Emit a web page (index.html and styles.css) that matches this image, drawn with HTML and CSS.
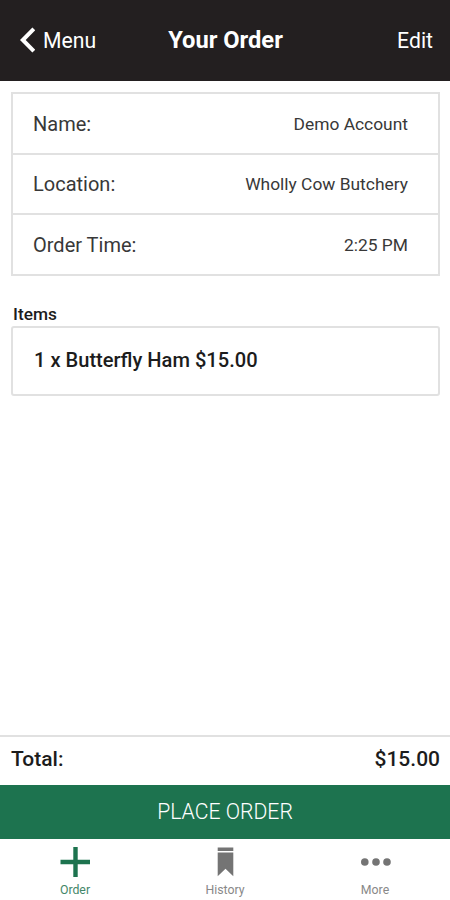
FILE: index.html
```html
<!DOCTYPE html>
<html lang="en">
<head>
<meta charset="utf-8">
<title>Your Order</title>
<link rel="stylesheet" href="styles.css">
</head>
<body>
<div class="app">
  <header class="header">
    <a class="back"><svg class="chevron" width="17" height="26" viewBox="0 0 17 26"><path d="M15.8 1.8 4.8 13l11 11.2" fill="none" stroke="currentColor" stroke-width="4"/></svg><span class="label">Menu</span></a>
    <h1 class="title">Your Order</h1>
    <a class="edit">Edit</a>
  </header>
  <main class="content">
    <dl class="details">
      <div class="row"><dt>Name:</dt><dd class="value">Demo Account</dd></div>
      <div class="row"><dt>Location:</dt><dd class="value">Wholly Cow Butchery</dd></div>
      <div class="row"><dt>Order Time:</dt><dd class="value">2:25 PM</dd></div>
    </dl>
    <h2 class="items-title">Items</h2>
    <div class="item"><span>1 x Butterfly Ham $15.00</span></div>
  </main>
  <div class="total"><span>Total:</span><span>$15.00</span></div>
  <button class="place"><span>PLACE ORDER</span></button>
  <nav class="tabs">
    <a class="tab active"><svg width="30" height="30" viewBox="0 0 30 30"><path d="M15.5 0v30M.5 15h30" stroke="currentColor" stroke-width="4.4"/></svg><span>Order</span></a>
    <a class="tab"><svg width="30" height="30" viewBox="0 0 30 30"><path d="M7.7 .5h15.6v3.6H7.7zM7.7 5.5h15.6v23.8l-7.8-7.6-7.8 7.6z" fill="currentColor"/></svg><span>History</span></a>
    <a class="tab"><svg width="31" height="30" viewBox="0 0 31 30"><g fill="currentColor"><circle cx="4.8" cy="15" r="3.8"/><circle cx="16" cy="15" r="3.8"/><circle cx="27" cy="15" r="3.8"/></g></svg><span>More</span></a>
  </nav>
</div>
</body>
</html>
```
FILE: styles.css
```css
* { box-sizing: border-box; }
body { margin: 0; background: #fff; color: #1c1c1c; font-family: Roboto, sans-serif; }
.app { height: 900px; display: flex; flex-direction: column; }
.header { height: 81px; flex: none; background: #231f20; color: #fff; display: grid; grid-template-columns: 1fr auto 1fr; align-items: center; padding: 0 17px 1px 18px; font-size: 21.2px; }
.back { display: flex; align-items: center; gap: 8px; }
.title { margin: 0; font-size: 23.7px; font-weight: 700; line-height: 28px; }
.edit { text-align: right; }
.content { flex: 1; padding: 11px 10px 0 11px; }
.details { margin: 0; border: 2px solid #e1e1e1; height: 184px; display: grid; grid-template-rows: 59px 60px 61px; }
.row { display: flex; justify-content: space-between; align-items: center; padding: 0 30px 0 20px; font-size: 20px; color: #383838; }
.row + .row { border-top: 2px solid #e1e1e1; }
.value { margin: 0; font-size: 17.4px; }
.items-title { margin: 28px 2px 2px; font-size: 17.3px; line-height: 20px; font-weight: 500; }
.item { height: 70px; border: 2px solid #e1e1e1; border-radius: 3px; padding: 0 21px 2px; display: flex; align-items: center; font-size: 20.1px; font-weight: 500; }
.total { height: 50px; border-top: 2px solid #e1e1e1; display: flex; align-items: center; justify-content: space-between; padding: 0 10px 5px 11px; font-size: 21px; font-weight: 500; }
.place { height: 54px; border: 0; background: #1d734f; color: #fff; font: 300 21.2px Roboto, sans-serif; padding: 0 0 1px; }
.tabs { height: 61px; display: grid; grid-template-columns: repeat(3, 1fr); }
.tab { display: flex; flex-direction: column; align-items: center; padding-top: 8px; color: #747474; font-size: 12.3px; gap: 6px; }
.tab span { opacity: .85; }
.active { color: #1d734f; }
```
